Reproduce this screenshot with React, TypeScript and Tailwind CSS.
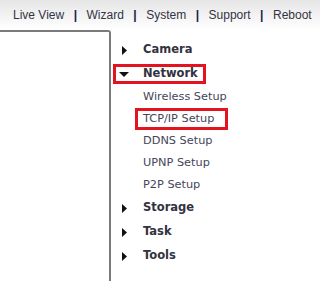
import React from "react";

const Right = () => (
  <svg width="5" height="9" viewBox="0 0 5 9" className="shrink-0">
    <polygon points="0,0 5,4.5 0,9" fill="#111" />
  </svg>
);
const Down = () => (
  <svg width="10" height="5" viewBox="0 0 10 5" className="shrink-0">
    <polygon points="0,0 10,0 5,5" fill="#111" />
  </svg>
);

const Sep = () => <span className="px-[9.5px] font-bold text-[#1a1a48]">|</span>;

const Main = ({ label }: { label: string }) => (
  <div className="h-[24px] flex items-center pl-[11px]">
    <Right />
    <span className="ml-[16px] font-bold text-[11.5px] text-[#333340]">{label}</span>
  </div>
);

const Sub = ({ label }: { label: string }) => (
  <div className="h-[22px] flex items-center pl-[32px] text-[11.3px] text-[#45455a]">{label}</div>
);

export default function App() {
  return (
    <div className="w-[320px] h-[281px] bg-white overflow-hidden" style={{ fontFamily: '"DejaVu Sans", Verdana, sans-serif' }}>
      <div
        className="h-[30px] flex items-center pl-[13px] text-[12px] text-[#333344] bg-gradient-to-b from-[#e6e6e6] to-white"
        style={{ fontFamily: '"Liberation Sans", Arial, sans-serif' }}
      >
        <span>Live View</span>
        <Sep />
        <span>Wizard</span>
        <Sep />
        <span>System</span>
        <Sep />
        <span>Support</span>
        <Sep />
        <span>Reboot</span>
      </div>
      <div className="flex">
        <div className="w-[111px] h-[251px] shrink-0 border-t-2 border-r-2 border-[#7a7a7a] rounded-tr-[3px]" />
        <div className="flex flex-col pt-[8px]">
          <Main label="Camera" />
          <div className="h-[24px] flex items-center">
            <div className="ml-[2px] w-[93px] h-[20px] border-[3px] border-[#e3141f] flex items-center pl-[3px]">
              <Down />
              <span className="ml-[14px] font-bold text-[11.5px] text-[#333340]">Network</span>
            </div>
          </div>
          <Sub label="Wireless Setup" />
          <div className="h-[22px] flex items-center">
            <div className="ml-[24px] w-[93px] h-[22px] border-[3px] border-[#e3141f] flex items-center pl-[5px] text-[11.3px] text-[#45455a]">
              TCP/IP Setup
            </div>
          </div>
          <Sub label="DDNS Setup" />
          <Sub label="UPNP Setup" />
          <Sub label="P2P Setup" />
          <Main label="Storage" />
          <Main label="Task" />
          <Main label="Tools" />
        </div>
      </div>
    </div>
  );
}
